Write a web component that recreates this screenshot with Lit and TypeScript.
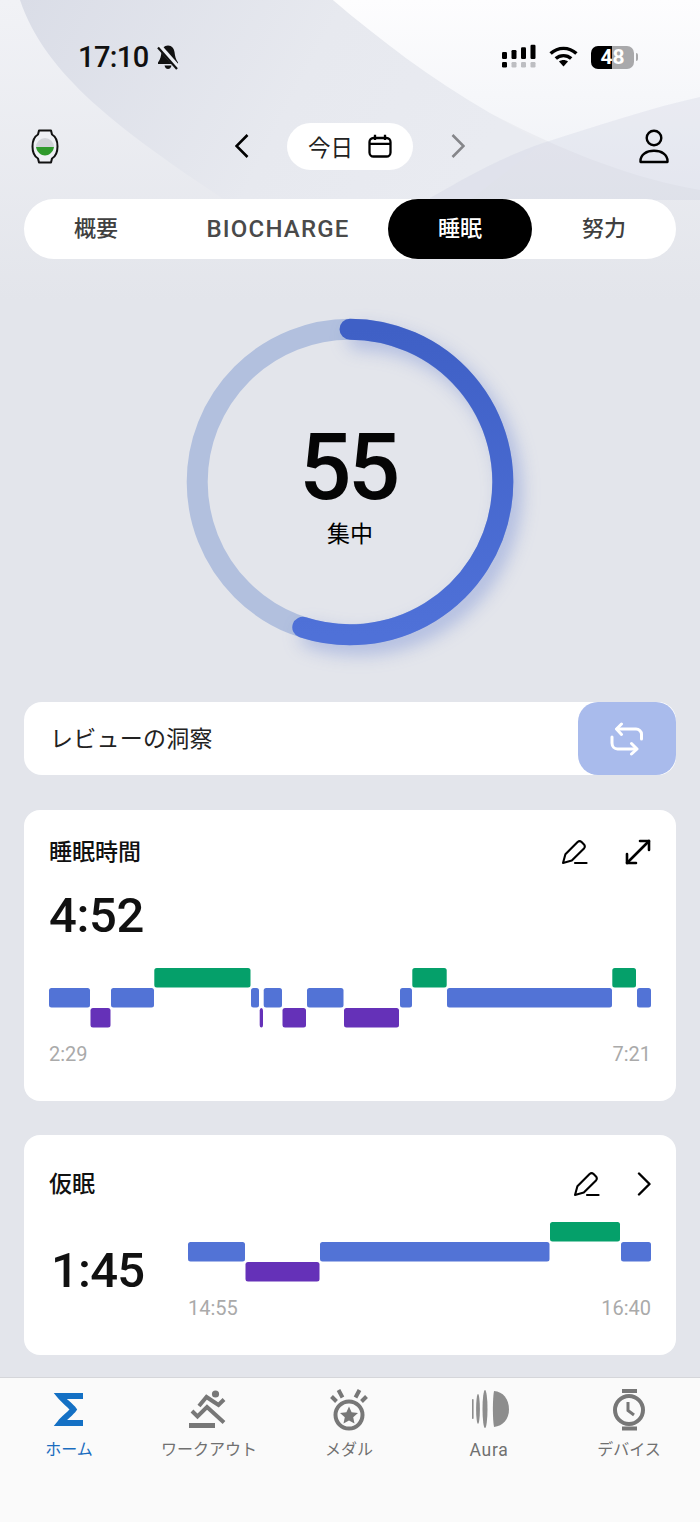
import { LitElement, html, css, svg } from "lit";
import { customElement } from "lit/decorators.js";

type Seg = [number, number, "b" | "g" | "p"];
const COLORS = { b: "#5273d6", g: "#05a06a", p: "#6531b8" };
const ROW = { g: 0, b: 20, p: 40 };

const sleep1: Seg[] = [
  [49, 90, "b"], [90.5, 110.5, "p"], [111, 154, "b"], [154.3, 250.5, "g"], [251, 259, "b"],
  [259.7, 263, "p"], [263.7, 282, "b"], [282.5, 306, "p"], [307, 343.5, "b"], [344, 399, "p"],
  [400, 412, "b"], [412.3, 446.7, "g"], [447, 612, "b"], [612.3, 636, "g"], [637, 651, "b"],
];
const sleep2: Seg[] = [
  [188, 245, "b"], [245.5, 319.5, "p"], [320, 549.5, "b"], [550, 620, "g"], [621, 651, "b"],
];

function chart(segs: Seg[], x0: number, w: number) {
  return html`<svg class="chart" width=${w} height="59" viewBox="0 0 ${w} 59">
    ${segs.map(
      ([a, b, k]) => svg`<rect x=${a - x0} y=${ROW[k]} width=${b - a} height="19.5" rx="2.5" fill=${COLORS[k]}></rect>`
    )}
  </svg>`;
}

const pen = html`<svg class="ic" width="26" height="25" viewBox="0 0 26 25" fill="none" stroke="#000" stroke-width="2.1" stroke-linejoin="round" stroke-linecap="round">
  <path d="M1 23 L3.4 14.2 L15.6 2 Q17.6 .4 19.6 2 L22 4.4 Q23.6 6.4 22 8.4 L9.8 20.6 Z"></path>
  <path d="M13 23 H24.6"></path>
</svg>`;

const R = 152.8;
const endAngle = (0.55 * 360 * Math.PI) / 180;
const endX = 170 + R * Math.sin(endAngle);
const endY = 170 - R * Math.cos(endAngle);

@customElement("app-root")
export class AppRoot extends LitElement {
  static styles = css`
    :host {
      display: flex;
      flex-direction: column;
      position: relative;
      width: 700px;
      height: 1522px;
      overflow: hidden;
      background: #e3e5eb;
      font-family: Roboto, "Noto Sans CJK JP", sans-serif;
      color: #000;
    }
    .bg { position: absolute; left: 0; top: 0; }
    .layer { position: relative; display: flex; flex-direction: column; flex: 1; }
    .status { height: 114px; display: flex; align-items: center; padding: 0 62px 0 78px; justify-content: space-between; box-sizing: border-box; }
    .status-left { display: flex; align-items: center; gap: 7px; }
    .clock { font-size: 29px; font-weight: 500; color: #111; line-height: 1; letter-spacing: -0.6px; }
    .status-right { display: flex; align-items: center; }
    .signal { margin-top: -2px; }
    .wifi { margin-left: 13px; }
    .battery-wrap { display: flex; align-items: center; margin-left: 13px; gap: 2px; }
    .battery {
      width: 43px; height: 23px; border-radius: 7px;
      background: linear-gradient(to right, #000 48%, #a9a9ab 48%);
      color: #fff; font-size: 21px; font-weight: 700; line-height: 23px; text-align: center;
    }
    .nub { width: 2px; height: 8px; background: #a9a9ab; border-radius: 0 2px 2px 0; }
    .nav { height: 64px; padding: 0 31px; display: flex; align-items: center; justify-content: space-between; margin-bottom: 21px; }
    .nav-mid { display: flex; align-items: center; gap: 36px; }
    .pill {
      width: 126px; height: 47px; border-radius: 24px; background: #fff; display: flex; align-items: center; justify-content: center; gap: 15px;
      font-size: 22.5px; color: #222;
    }
    .tabs {
      margin: 0 24px; height: 60px; border-radius: 30px; background: #fff;
      display: grid; grid-template-columns: 144px 220px 144px 144px;
      font-size: 22px; font-weight: 500; color: #404040; text-align: center; line-height: 60px;
    }
    .tabs .on { background: #000; color: #fff; border-radius: 30px; }
    .bio { font-size: 24px; letter-spacing: 1.2px; color: #4a4a4a; }
    .ring { position: relative; height: 340px; margin-top: 53px; display: flex; justify-content: center; }
    .ring svg { overflow: visible; }
    .arc { filter: drop-shadow(8px 9px 9px rgba(80, 110, 205, 0.36)); }
    .ring-text {
      position: absolute; inset: 0; display: flex; flex-direction: column; align-items: center;
    }
    .score { font-size: 92px; font-weight: 500; letter-spacing: -3.5px; line-height: 92px; margin-top: 110px; padding-right: 4px; color: #050505; }
    .focus { font-size: 23px; line-height: 30px; margin-top: 6px; }
    .insight {
      margin: 50px 24px 0; height: 73px; border-radius: 18px; background: #fff;
      display: flex; align-items: center; justify-content: space-between; padding-left: 26px;
      font-size: 23px; color: #222;
    }
    .insight-label { padding-bottom: 4px; letter-spacing: 0.25px; }
    .swap { width: 98px; height: 73px; border-radius: 20px; background: #a9bbec; display: flex; align-items: center; justify-content: center; }
    .card { margin: 35px 24px 0; padding: 20px 25px 35px; border-radius: 16px; background: #fff; box-sizing: border-box; }
    .card.second { margin-top: 34px; padding-top: 27px; }
    .head { display: flex; align-items: center; justify-content: space-between; height: 44px; }
    .title { font-size: 23px; font-weight: 500; color: #111; padding-bottom: 4px; }
    .acts { display: flex; align-items: center; gap: 37px; }
    .big { font-size: 49px; font-weight: 500; line-height: 50px; margin-top: 17px; color: #111; letter-spacing: -0.4px; }
    .chart { display: block; overflow: visible; }
    .first-chart { margin-top: 27px; }
    .times { display: flex; justify-content: space-between; font-size: 20px; line-height: 24px; margin-top: 15px; color: #aaa; }
    .nap { display: flex; align-items: center; margin-top: 16px; }
    .nap .big { margin: 0 0 0 2px; width: 137px; letter-spacing: -0.8px; }
    .tabbar {
      margin-top: auto; height: 145px; box-sizing: border-box; background: #fafafa; border-top: 1.5px solid #d5d6da;
      display: grid; grid-template-columns: repeat(5, 140px);
    }
    .item { display: flex; flex-direction: column; align-items: center; padding: 6px 2px 0 0; font-size: 16px; color: #707070; line-height: 24px; }
    .item span { margin-top: 4px; white-space: nowrap; }
    .item span.latin { font-size: 17.5px; letter-spacing: 0.7px; }
    .item.on { color: #1a6dbf; }
  `;

  render() {
    return html`
      <svg class="bg" width="700" height="300" viewBox="0 0 700 300">
        <defs>
          <linearGradient id="base" x1="0" y1="0" x2="0" y2="1">
            <stop offset="0" stop-color="#f1f2f6"></stop>
            <stop offset="1" stop-color="#e3e5eb"></stop>
          </linearGradient>
          <linearGradient id="swoop" x1="0" y1="0" x2="1" y2="0.2">
            <stop offset="0" stop-color="#dadde7"></stop>
            <stop offset="0.6" stop-color="#e7e9ef"></stop>
            <stop offset="1" stop-color="#e9ebf1"></stop>
          </linearGradient>
          <linearGradient id="white" x1="0" y1="0" x2="0" y2="1">
            <stop offset="0" stop-color="#fdfdfe"></stop>
            <stop offset="1" stop-color="#eff1f6"></stop>
          </linearGradient>
        </defs>
        <rect width="700" height="300" fill="url(#base)"></rect>
        <path d="M20 0 C45 75 120 130 225 200 H470 L543 143 L490 113 C430 78 380 40 333 0 Z" fill="url(#swoop)"></path>
        <path d="M333 0 C380 40 430 78 490 113 C560 150 630 178 700 190 V0 Z" fill="url(#white)"></path>
        <path d="M430 198 C470 175 500 158 543 143 C600 125 650 108 700 97 V200 H430 Z" fill="#c9cedd" fill-opacity="0.28"></path>
      </svg>
      <div class="layer" lang="ja">
        <div class="status">
          <div class="status-left">
            <span class="clock">17:10</span>
            <svg width="24" height="26" viewBox="0 0 24 26">
              <path d="M12 1.5 C8 1.5 6 4.5 5.5 8 C5 12 4.5 15 2 18.5 V20 H22 V18.5 C19.5 15 19 12 18.5 8 C18 4.5 16 1.5 12 1.5 Z" fill="#111"></path>
              <path d="M8.5 21.5 H15.5 C15 24 13.5 25 12 25 C10.5 25 9 24 8.5 21.5 Z" fill="#111"></path>
              <path d="M3 2 L22 23.5" stroke="#eceef3" stroke-width="5"></path>
              <path d="M2 3.5 L21 25" stroke="#111" stroke-width="2.2"></path>
            </svg>
          </div>
          <div class="status-right">
            <svg class="signal" width="34" height="24" viewBox="0 0 34 24">
              <g fill="#000">
                <rect x="0" y="8" width="5" height="7" rx="1.2"></rect>
                <rect x="9.5" y="6" width="5" height="9" rx="1.2"></rect>
                <rect x="19" y="3.3" width="5" height="11.7" rx="1.2"></rect>
                <rect x="28.5" y="0.7" width="5" height="14.3" rx="1.2"></rect>
                <rect x="0" y="18" width="5" height="5.5" rx="1.2"></rect>
              </g>
              <g fill="#bdbec2">
                <rect x="9.5" y="18" width="5" height="5.5" rx="1.2"></rect>
                <rect x="19" y="18" width="5" height="5.5" rx="1.2"></rect>
                <rect x="28.5" y="18" width="5" height="5.5" rx="1.2"></rect>
              </g>
            </svg>
            <svg class="wifi" width="29" height="22" viewBox="0 0 29 22" fill="none" stroke="#000" stroke-width="3.4">
              <path d="M1.6 7.6 C9 .6 20 .6 27.4 7.6"></path>
              <path d="M6.8 12.6 C11 8.6 18 8.6 22.2 12.6"></path>
              <path d="M10 15.4 L14.5 20.6 L19 15.4 C16.5 13.4 12.5 13.4 10 15.4 Z" fill="#000" stroke="none"></path>
            </svg>
            <div class="battery-wrap">
              <div class="battery">48</div>
              <div class="nub"></div>
            </div>
          </div>
        </div>
        <div class="nav">
          <svg width="30" height="35" viewBox="0 0 30 35">
            <path d="M7 5.5 L8 1.5 H20 L21 5.5 C24.5 7.5 26.5 12 26.5 17.5 C26.5 23 24.5 27.5 21 29.5 L20 33.5 H8 L7 29.5 C3.5 27.5 1.5 23 1.5 17.5 C1.5 12 3.5 7.5 7 5.5 Z" fill="#eef0f4" stroke="#111" stroke-width="2" stroke-linejoin="round"></path>
            <path d="M5 18 A9 9 0 0 1 23 18 Z" fill="#d2d4d9"></path>
            <path d="M5 18 H23 C22 23.5 18 26.5 14 26.5 C10 26.5 6 23.5 5 18 Z" fill="#2f9a2c"></path>
          </svg>
          <div class="nav-mid">
            <svg width="16" height="26" viewBox="0 0 16 26" fill="none" stroke="#000" stroke-width="2.6"><path d="M12.5 2 L1.5 13 L12.5 24"></path></svg>
            <div class="pill">
              <span>今日</span>
              <svg width="24" height="24" viewBox="0 0 24 24" fill="none" stroke="#000" stroke-width="2.3">
                <rect x="1.5" y="4" width="21" height="18.5" rx="4"></rect>
                <path d="M1.5 9.8 H22.5 M7 .8 V6 M17 .8 V6"></path>
              </svg>
            </div>
            <svg width="16" height="26" viewBox="0 0 16 26" fill="none" stroke="#85868a" stroke-width="2.6"><path d="M3.5 2 L14.5 13 L3.5 24"></path></svg>
          </div>
          <svg width="30" height="35" viewBox="0 0 30 35" fill="none" stroke="#000" stroke-width="2.4">
            <circle cx="15" cy="9" r="7.3"></circle>
            <path d="M1.5 33 C1 25 8 21.8 15 21.8 C22 21.8 29 25 28.5 33 Z" stroke-linejoin="round"></path>
          </svg>
        </div>
        <div class="tabs">
          <div>概要</div>
          <div class="bio">BIOCHARGE</div>
          <div class="on">睡眠</div>
          <div>努力</div>
        </div>
        <div class="ring">
          <svg width="340" height="340" viewBox="0 0 340 340" fill="none" stroke-width="21">
            <defs>
              <linearGradient id="arcFill" gradientUnits="userSpaceOnUse" x1="0" y1="17" x2="0" y2="323">
                <stop offset="0" stop-color="#3f60c6"></stop>
                <stop offset="1" stop-color="#4f71d8"></stop>
              </linearGradient>
            </defs>
            <circle cx="170" cy="170" r=${R} stroke="#b2c0de"></circle>
            <path class="arc" d="M170 ${170 - R} A${R} ${R} 0 1 1 ${endX} ${endY}" stroke="url(#arcFill)" stroke-linecap="round"></path>
          </svg>
          <div class="ring-text">
            <div class="score">55</div>
            <div class="focus">集中</div>
          </div>
        </div>
        <div class="insight">
          <span class="insight-label">レビューの洞察</span>
          <div class="swap">
            <svg width="34" height="34" viewBox="0 0 34 34" fill="none" stroke="#fff" stroke-width="3" stroke-linecap="round" stroke-linejoin="round">
              <path d="M7 7 H26 C29 7 31.5 9.5 31.5 12 V17"></path>
              <path d="M11.5 2 L6.5 7 L11.5 12.5"></path>
              <path d="M2 15 V21 C2 24.5 4.5 27 7.5 27 H26"></path>
              <path d="M21.5 21.5 L27 27 L21.5 32"></path>
            </svg>
          </div>
        </div>
        <div class="card">
          <div class="head">
            <div class="title">睡眠時間</div>
            <div class="acts">
              ${pen}
              <svg width="26" height="26" viewBox="0 0 26 26" fill="none" stroke="#000" stroke-width="2.6" stroke-linecap="round" stroke-linejoin="round">
                <path d="M2 24 L24 2"></path>
                <path d="M15 2 H24 V11"></path>
                <path d="M2 15 V24 H11"></path>
              </svg>
            </div>
          </div>
          <div class="big">4:52</div>
          <div class="first-chart">${chart(sleep1, 49, 602)}</div>
          <div class="times"><span>2:29</span><span>7:21</span></div>
        </div>
        <div class="card second">
          <div class="head">
            <div class="title">仮眠</div>
            <div class="acts">
              ${pen}
              <svg width="14" height="24" viewBox="0 0 14 24" fill="none" stroke="#000" stroke-width="2.4" stroke-linecap="round" stroke-linejoin="round">
                <path d="M2 1.5 L12.5 12 L2 22.5"></path>
              </svg>
            </div>
          </div>
          <div class="nap">
            <div class="big">1:45</div>
            <div>
              ${chart(sleep2, 188, 463)}
              <div class="times"><span>14:55</span><span>16:40</span></div>
            </div>
          </div>
        </div>
        <div class="tabbar">
          <div class="item on">
            <svg width="60" height="50" viewBox="0 0 60 50" fill="none" stroke="#1470c4" stroke-width="6">
              <path d="M44 12 H21 C25 17 32 22 34.5 25.5 C32 29 25 34 21 39 H44"></path>
            </svg>
            <span>ホーム</span>
          </div>
          <div class="item">
            <svg width="60" height="50" viewBox="0 0 60 50" fill="none" stroke="#777" stroke-width="4">
              <circle cx="36.5" cy="10" r="3.6" fill="#777" stroke="none"></circle>
              <path d="M13 27 L18.5 32.5 L28 23 L45 38.5"></path>
              <path d="M20 22 L27.5 13 L35 18 L39.5 21 L45 15.5"></path>
              <path d="M10 41.5 H36" stroke-width="5"></path>
            </svg>
            <span>ワークアウト</span>
          </div>
          <div class="item">
            <svg width="60" height="50" viewBox="0 0 60 50" fill="none" stroke="#777" stroke-width="4">
              <circle cx="30" cy="31" r="13.5"></circle>
              <path d="M30 22.5 L32.6 28.3 L39 29 L34.2 33.3 L35.5 39.5 L30 36.4 L24.5 39.5 L25.8 33.3 L21 29 L27.4 28.3 Z" fill="#777" stroke="none"></path>
              <path d="M12.5 12.5 L17.5 17.5 M19.5 6 L23.5 13.5 M40.5 6 L36.5 13.5 M47.5 12.5 L42.5 17.5"></path>
            </svg>
            <span>メダル</span>
          </div>
          <div class="item">
            <svg width="60" height="50" viewBox="0 0 60 50" fill="#8d8d8d">
              <rect x="13" y="15" width="1.6" height="20" rx="0.8"></rect>
              <ellipse cx="19" cy="25" rx="1.9" ry="15"></ellipse>
              <ellipse cx="26" cy="25" rx="2.5" ry="19"></ellipse>
              <path d="M35 7 C44 7.5 50 15 50 25.5 C50 35 44 42 35 43 C33.5 35 33.5 15 35 7 Z"></path>
            </svg>
            <span class="latin">Aura</span>
          </div>
          <div class="item">
            <svg width="60" height="50" viewBox="0 0 60 50" fill="none" stroke="#777" stroke-width="4">
              <circle cx="30" cy="26" r="14"></circle>
              <path d="M23 7 H38 M23 44.5 H38"></path>
              <path d="M29 18 V26.5 L35 31" stroke-width="3"></path>
            </svg>
            <span>デバイス</span>
          </div>
        </div>
      </div>
    `;
  }
}
